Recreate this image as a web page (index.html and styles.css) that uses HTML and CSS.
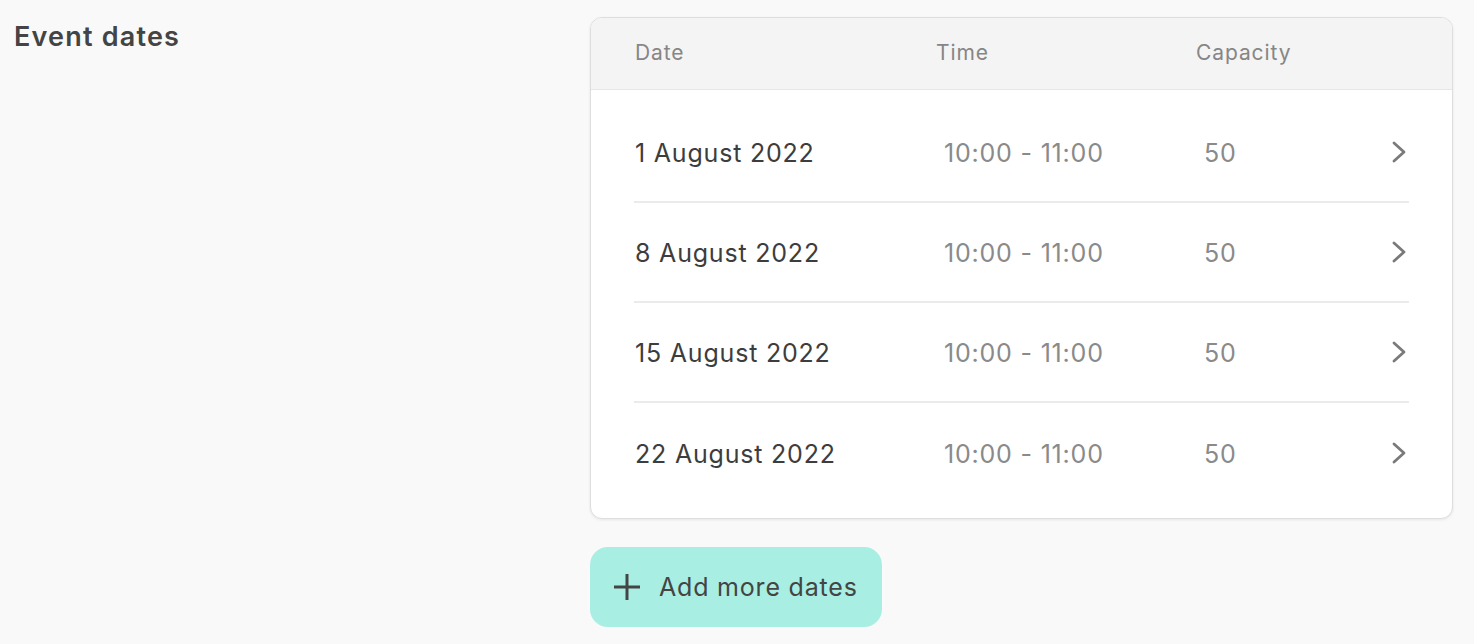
FILE: index.html
```html
<!DOCTYPE html>
<html lang="en">
<head>
<meta charset="utf-8">
<title>Event dates</title>
<link rel="stylesheet" href="styles.css">
</head>
<body>
<div class="page">
  <div class="label-col">
    <h2 class="section-title">Event dates</h2>
  </div>
  <div class="content-col">
    <div class="card">
      <div class="table-head">
        <div class="th">Date</div>
        <div class="th">Time</div>
        <div class="th">Capacity</div>
        <div class="th"></div>
      </div>
      <div class="table-body">
        <div class="tr">
          <div class="td date">1 August 2022</div>
          <div class="td muted">10:00 - 11:00</div>
          <div class="td muted">50</div>
          <div class="td chev"><svg width="16" height="22" viewBox="0 0 16 22"><path d="M3 2 L13 11 L3 20" fill="none" stroke="#7a7a7a" stroke-width="2.8" stroke-linecap="round" stroke-linejoin="round"/></svg></div>
        </div>
        <div class="tr">
          <div class="td date">8 August 2022</div>
          <div class="td muted">10:00 - 11:00</div>
          <div class="td muted">50</div>
          <div class="td chev"><svg width="16" height="22" viewBox="0 0 16 22"><path d="M3 2 L13 11 L3 20" fill="none" stroke="#7a7a7a" stroke-width="2.8" stroke-linecap="round" stroke-linejoin="round"/></svg></div>
        </div>
        <div class="tr">
          <div class="td date">15 August 2022</div>
          <div class="td muted">10:00 - 11:00</div>
          <div class="td muted">50</div>
          <div class="td chev"><svg width="16" height="22" viewBox="0 0 16 22"><path d="M3 2 L13 11 L3 20" fill="none" stroke="#7a7a7a" stroke-width="2.8" stroke-linecap="round" stroke-linejoin="round"/></svg></div>
        </div>
        <div class="tr last">
          <div class="td date">22 August 2022</div>
          <div class="td muted">10:00 - 11:00</div>
          <div class="td muted">50</div>
          <div class="td chev"><svg width="16" height="22" viewBox="0 0 16 22"><path d="M3 2 L13 11 L3 20" fill="none" stroke="#7a7a7a" stroke-width="2.8" stroke-linecap="round" stroke-linejoin="round"/></svg></div>
        </div>
      </div>
    </div>
    <button class="add-btn" type="button">
      <svg width="26" height="26" viewBox="0 0 26 26"><path d="M13 0 V26 M0 13 H26" stroke="#444" stroke-width="3"/></svg>
      <span>Add more dates</span>
    </button>
  </div>
</div>
</body>
</html>
```

FILE: styles.css
```css
* { box-sizing: border-box; }
html, body {
  margin: 0;
  padding: 0;
  background: #f9f9f9;
  font-family: "Inter", "Open Sans", "Liberation Sans", sans-serif;
  color: #3f3f3f;
}
.page {
  display: flex;
  align-items: flex-start;
}
.label-col {
  width: 590px;
  padding: 20px 0 0 14px;
}
.section-title {
  margin: 0;
  font-size: 27px;
  font-weight: 600;
  color: #444;
  letter-spacing: 1.2px;
}
.content-col {
  width: 864px;
  padding-top: 17px;
  display: flex;
  flex-direction: column;
  align-items: flex-start;
}
.card {
  width: 863px;
  background: #fff;
  border: 1px solid #dedede;
  border-radius: 12px;
  box-shadow: 0 1px 3px rgba(0,0,0,0.08);
  overflow: hidden;
}
.table-head,
.tr {
  display: grid;
  grid-template-columns: 301px 260px 1fr 24px;
  align-items: center;
}
.table-head {
  height: 72px;
  background: #f4f4f4;
  border-bottom: 1px solid #e6e6e6;
  padding: 0 44px;
}
.th {
  font-size: 21px;
  color: #868686;
  letter-spacing: 0.9px;
  padding-bottom: 2px;
}
.table-body {
  padding: 13px 43px 15px 43px;
}
.tr {
  height: 100px;
  border-bottom: 2px solid #ebebeb;
}
.tr.last { border-bottom: none; }
.td {
  font-size: 25px;
  letter-spacing: 0.8px;
  padding-top: 2px;
}
.td.date {
  color: #3d3d3d;
  padding-left: 1px;
}
.td.muted {
  color: #8a8a8a;
  padding-left: 9px;
}
.td.chev {
  display: flex;
  justify-content: flex-end;
  align-items: center;
  padding: 0 2px 0 0;
}
.add-btn {
  margin-top: 28px;
  height: 80px;
  width: 292px;
  border: none;
  border-radius: 18px;
  background: #a8eee3;
  display: flex;
  align-items: center;
  gap: 19px;
  padding: 0 0 0 24px;
  font-family: inherit;
  font-size: 25px;
  letter-spacing: 0.8px;
  color: #444;
  cursor: pointer;
}
```
